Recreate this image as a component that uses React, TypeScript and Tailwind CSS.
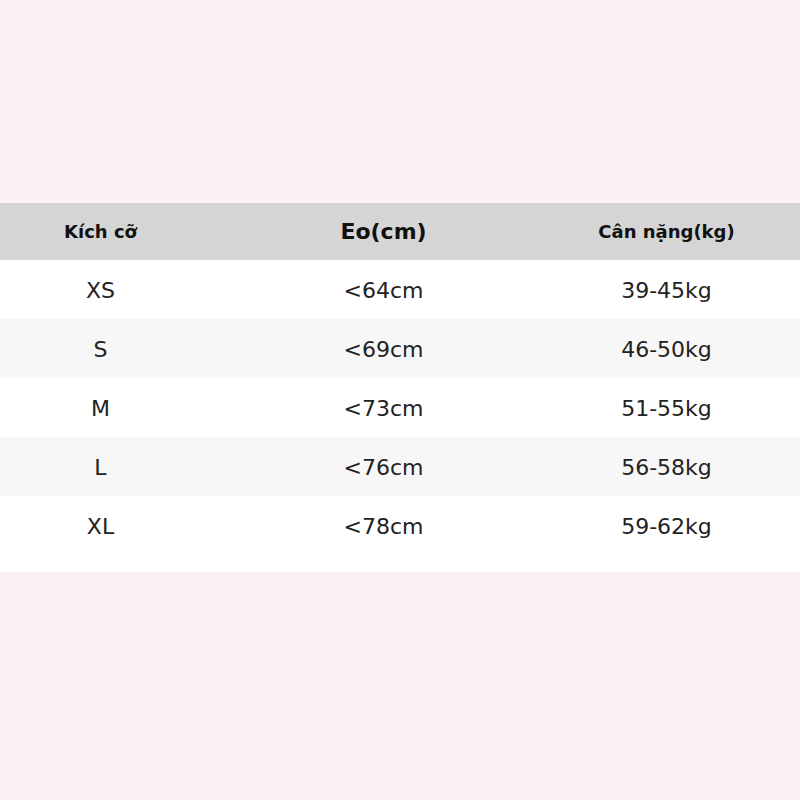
import React from "react";

const ROWS = [
  ["XS", "<64cm", "39-45kg"],
  ["S", "<69cm", "46-50kg"],
  ["M", "<73cm", "51-55kg"],
  ["L", "<76cm", "56-58kg"],
  ["XL", "<78cm", "59-62kg"],
];

export default function App() {
  return (
    <div
      className="min-h-[800px] w-[800px] bg-[#fdf1f7] pt-[203px]"
      style={{ fontFamily: '"DejaVu Sans", sans-serif' }}
    >
      <div className="bg-white pb-[17px]">
        {/* Header */}
        <div className="grid h-[57px] grid-cols-[201px_365px_201px] items-center bg-[#d5d5d5] font-bold text-[#111]">
          <div className="text-center text-[18px]">Kích cỡ</div>
          <div className="text-center text-[22px]">Eo(cm)</div>
          <div className="text-center text-[18px]">Cân nặng(kg)</div>
        </div>

        {/* Rows */}
        {ROWS.map((row, i) => (
          <div
            key={row[0]}
            className={`grid h-[59px] grid-cols-[201px_365px_201px] items-center pt-[2px] text-[22px] text-[#222] ${
              i % 2 === 1 ? "bg-[#f7f7f7]" : "bg-white"
            }`}
          >
            {row.map((cell, j) => (
              <div key={j} className="text-center">
                {cell}
              </div>
            ))}
          </div>
        ))}
      </div>
    </div>
  );
}
